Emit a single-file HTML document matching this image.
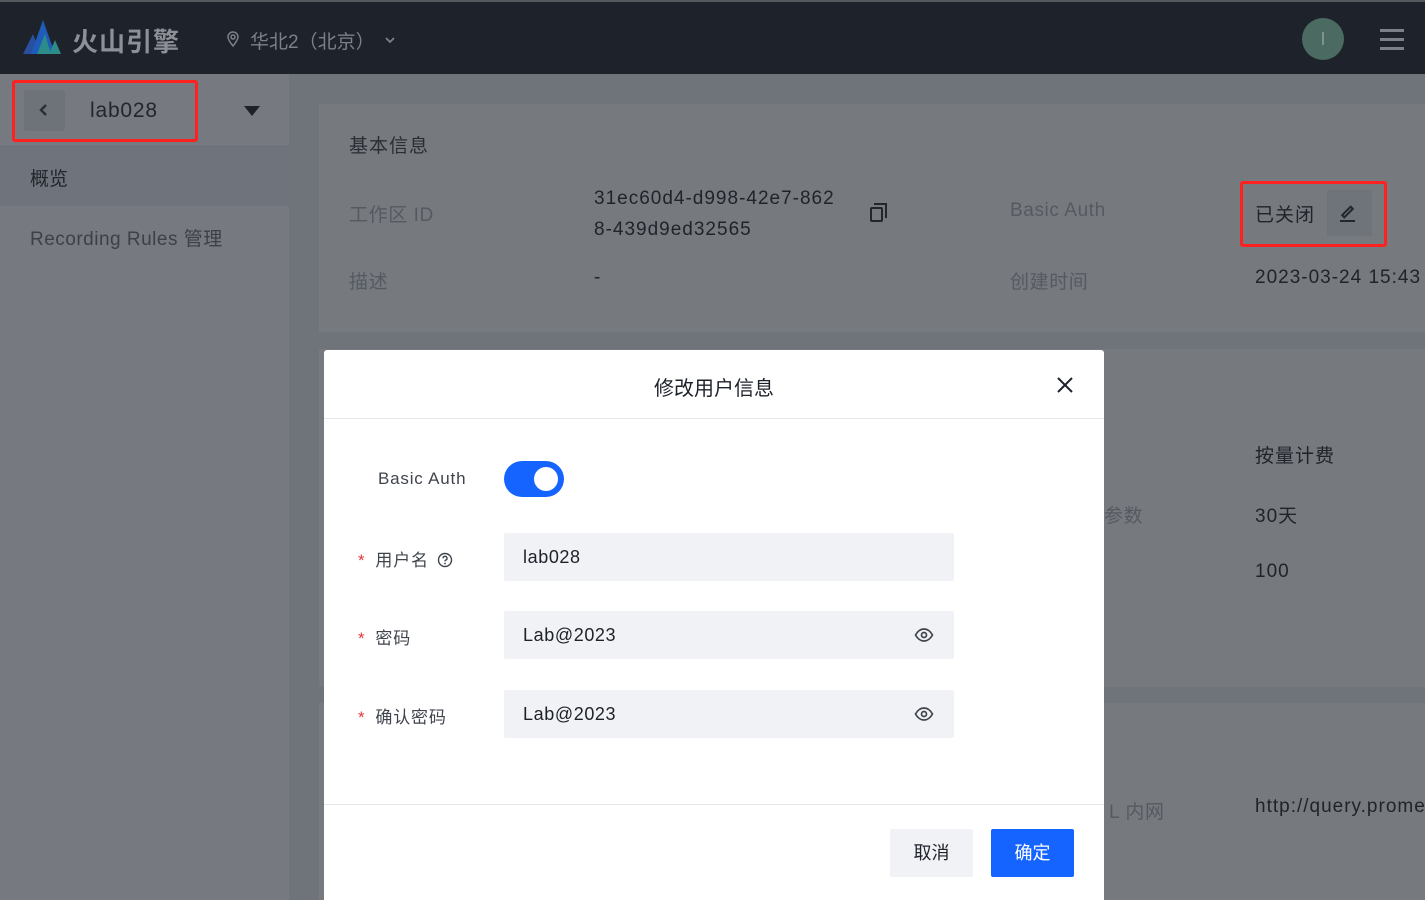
<!DOCTYPE html>
<html><head><meta charset="utf-8"><style>
*{margin:0;padding:0;box-sizing:border-box}
body{width:1425px;height:900px;overflow:hidden;background:#6f737a;font-family:"Liberation Sans","Noto Sans CJK SC",sans-serif;position:relative}
.abs{position:absolute}
.top{left:0;top:0;width:1425px;height:74px;background:#1e222b;border-top:2px solid #54575c}
.side{left:0;top:74px;width:289px;height:826px;background:#76797f}
.card{background:#76797e;left:319px;width:1106px}
.lbl{color:#555a62;font-size:19px;letter-spacing:.6px}
.val{color:#1f232a;font-size:19px;letter-spacing:1px;white-space:nowrap}
.modal{left:324px;top:350px;width:780px;height:550px;background:#fff;border-radius:3px 3px 0 0}
.inp{position:absolute;left:180px;width:450px;height:48px;background:#f1f2f6;border-radius:2px;font-size:18px;letter-spacing:.6px;color:#1d2129;padding:0 19px;line-height:48px}
.fl{position:absolute;left:54px;font-size:17px;color:#40454d;letter-spacing:.8px}
.fl b{color:#e5383b;font-weight:normal;margin-right:10px}
.eye{position:absolute;right:20px;top:15px}
</style></head><body>
<div class="abs top">
 <svg class="abs" style="left:23px;top:18px" width="40" height="36" viewBox="0 0 40 36"><polygon points="0,34 10,14 18,34" fill="#2a4f9e"/><polygon points="8,34 20,0 32,34" fill="#1f5bb8"/><polygon points="14,34 22,14 28,34" fill="#2b8c8a"/><polygon points="26,34 32,20 38,34" fill="#2b8c8a"/></svg>
 <div class="abs" style="left:72px;top:20px;color:#8d9097;font-size:26px;font-weight:bold;letter-spacing:1px">火山引擎</div>
 <svg class="abs" style="left:226px;top:28px" width="14" height="18" viewBox="0 0 14 18"><path d="M7 16C3 11 2 9 2 7a5 5 0 0 1 10 0c0 2-1 4-5 9z" fill="none" stroke="#7c8087" stroke-width="1.5"/><circle cx="7" cy="7" r="2" fill="none" stroke="#7c8087" stroke-width="1.5"/></svg>
 <div class="abs" style="left:250px;top:25px;color:#7c8087;font-size:19px">华北2（北京）</div>
 <svg class="abs" style="left:384px;top:34px" width="12" height="8" viewBox="0 0 12 8"><path d="M2 2l4 4 4-4" fill="none" stroke="#7c8087" stroke-width="1.8"/></svg>
 <div class="abs" style="left:1302px;top:16px;width:42px;height:42px;border-radius:50%;background:#4a6a62;color:#8a9a95;text-align:center;line-height:42px;font-size:18px">I</div>
 <div class="abs" style="left:1380px;top:27px;width:24px;height:3px;background:#7c8087;box-shadow:0 9px 0 #7c8087,0 18px 0 #7c8087"></div>
</div>
<div class="abs side">
 <div class="abs" style="left:24px;top:16px;width:41px;height:41px;background:#6e7279;border-radius:3px"></div>
 <svg class="abs" style="left:38px;top:29px" width="12" height="14" viewBox="0 0 12 14"><path d="M8 2L3 7l5 5" fill="none" stroke="#2a2e35" stroke-width="2.4"/></svg>
 <div class="abs" style="left:90px;top:25px;font-size:21px;color:#22262d;letter-spacing:.8px">lab028</div>
 <div class="abs" style="left:244px;top:32px;border:8px solid transparent;border-top:10px solid #1e2228;border-bottom:none"></div>
 <div class="abs" style="left:12px;top:6px;width:186px;height:62px;border:3px solid #ff2020;border-radius:3px"></div>
 <div class="abs" style="left:0;top:72px;width:289px;height:60px;background:#6f737b;border-top:1px solid #6b6f76"></div>
 <div class="abs" style="left:30px;top:90px;font-size:19px;color:#22262d">概览</div>
 <div class="abs" style="left:30px;top:150px;font-size:19px;color:#3c4048;letter-spacing:.5px">Recording Rules 管理</div>
</div>
<div class="abs card" style="top:104px;height:228px">
 <div class="abs val" style="left:30px;top:27px;color:#2a2e35">基本信息</div>
 <div class="abs lbl" style="left:30px;top:96px">工作区 ID</div>
 <div class="abs val" style="left:275px;top:79px;line-height:31px">31ec60d4-d998-42e7-862<br>8-439d9ed32565</div>
 <div class="abs" style="left:551px;top:103px;width:13px;height:15px;border:2px solid #22262d;border-radius:2px"></div>
 <div class="abs" style="left:555px;top:99px;width:13px;height:15px;border-top:2px solid #22262d;border-right:2px solid #22262d"></div>
 <div class="abs lbl" style="left:691px;top:96px">Basic Auth</div>
 <div class="abs val" style="left:936px;top:96px">已关闭</div>
 <div class="abs" style="left:1008px;top:86px;width:45px;height:46px;background:#6f737a"></div>
 <div class="abs" style="left:1021px;top:116px;width:15px;height:2px;background:#22262d"></div>
 <div class="abs" style="left:1026px;top:101px;width:5px;height:14px;border:2px solid #22262d;transform:rotate(45deg)"></div>
 <div class="abs" style="left:921px;top:77px;width:147px;height:66px;border:3px solid #ff2020;border-radius:3px"></div>
 <div class="abs lbl" style="left:30px;top:163px">描述</div>
 <div class="abs val" style="left:275px;top:163px">-</div>
 <div class="abs lbl" style="left:691px;top:163px">创建时间</div>
 <div class="abs val" style="left:936px;top:163px">2023-03-24 15:43</div>
</div>
<div class="abs card" style="top:349px;height:338px">
 <div class="abs val" style="left:936px;top:92px">按量计费</div>
 <div class="abs lbl" style="left:785px;top:152px">参数</div>
 <div class="abs val" style="left:936px;top:152px">30天</div>
 <div class="abs val" style="left:936px;top:212px">100</div>
</div>
<div class="abs card" style="top:703px;height:197px">
 <div class="abs lbl" style="left:790px;top:94px">L 内网</div>
 <div class="abs val" style="left:936px;top:93px">http://query.prometheus</div>
</div>
<div class="abs modal">
 <div class="abs" style="left:0;top:22px;width:780px;text-align:center;font-size:20px;color:#1d2129">修改用户信息</div>
 <svg class="abs" style="left:732px;top:26px" width="18" height="18" viewBox="0 0 18 18"><path d="M2 2l14 14M16 2L2 16" stroke="#1d2129" stroke-width="2"/></svg>
 <div class="abs" style="left:0;top:68px;width:780px;height:1px;background:#e5e6eb"></div>
 <div class="fl" style="top:119px">Basic Auth</div>
 <div class="abs" style="left:180px;top:111px;width:60px;height:36px;border-radius:18px;background:#1664ff"><div class="abs" style="left:30px;top:6px;width:24px;height:24px;border-radius:50%;background:#fff"></div></div>
 <div class="fl" style="top:196px;left:34px"><b>*</b>用户名 <svg style="vertical-align:-2px;margin-left:3px" width="16" height="16" viewBox="0 0 16 16"><circle cx="8" cy="8" r="6.5" fill="none" stroke="#40454d" stroke-width="1.4"/><path d="M6 6.3a2 2 0 1 1 2.6 1.9c-.5.2-.6.6-.6 1.2" fill="none" stroke="#40454d" stroke-width="1.4"/><circle cx="8" cy="11.5" r=".9" fill="#40454d"/></svg></div>
 <div class="inp" style="top:183px">lab028</div>
 <div class="fl" style="top:274px;left:34px"><b>*</b>密码</div>
 <div class="inp" style="top:261px">Lab@2023<svg class="eye" width="20" height="18" viewBox="0 0 20 18"><path d="M1.5 9C4 4.5 7 3 10 3s6 1.5 8.5 6C16 13.5 13 15 10 15S4 13.5 1.5 9z" fill="none" stroke="#40454d" stroke-width="1.7"/><circle cx="10" cy="9" r="2.5" fill="none" stroke="#40454d" stroke-width="1.7"/></svg></div>
 <div class="fl" style="top:353px;left:34px"><b>*</b>确认密码</div>
 <div class="inp" style="top:340px">Lab@2023<svg class="eye" width="20" height="18" viewBox="0 0 20 18"><path d="M1.5 9C4 4.5 7 3 10 3s6 1.5 8.5 6C16 13.5 13 15 10 15S4 13.5 1.5 9z" fill="none" stroke="#40454d" stroke-width="1.7"/><circle cx="10" cy="9" r="2.5" fill="none" stroke="#40454d" stroke-width="1.7"/></svg></div>
 <div class="abs" style="left:0;top:454px;width:780px;height:1px;background:#e5e6eb"></div>
 <div class="abs" style="left:566px;top:479px;width:83px;height:48px;background:#f1f2f6;border-radius:2px;text-align:center;line-height:48px;font-size:18px;color:#1d2129">取消</div>
 <div class="abs" style="left:667px;top:479px;width:83px;height:48px;background:#1664ff;border-radius:2px;text-align:center;line-height:48px;font-size:18px;color:#fff">确定</div>
</div>
</body></html>
